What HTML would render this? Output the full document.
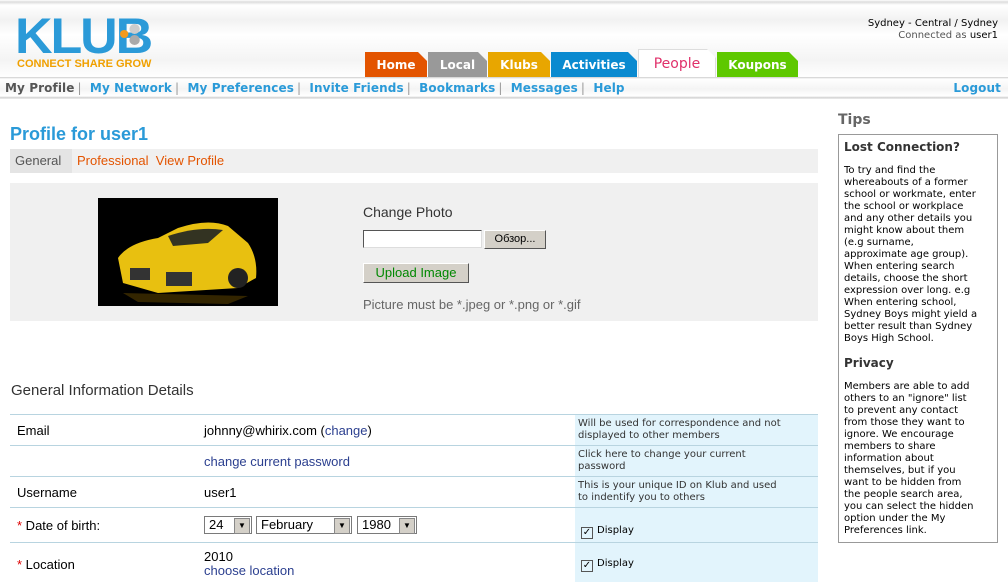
<!DOCTYPE html>
<html><head><meta charset="utf-8"><style>
*{margin:0;padding:0;box-sizing:border-box}
body{width:1008px;height:582px;overflow:hidden;background:#fff;font-family:"Liberation Sans",sans-serif;position:relative;font-size:13px;color:#000}
.a{position:absolute;white-space:nowrap}
.v{font-family:"DejaVu Sans",Verdana,sans-serif}
.tab{position:absolute;top:52px;height:26px;color:#fff;font:bold 12px "DejaVu Sans",sans-serif;text-align:center;line-height:27px;clip-path:polygon(0 0,calc(100% - 9px) 0,100% 9px,100% 100%,0 100%)}
.nav{font:bold 12px "DejaVu Sans",sans-serif;color:#2a9ad8;top:81px;letter-spacing:0.1px}
.sep{color:#999;font-weight:normal;margin:0 4px 0 3px}
.row{position:absolute;left:10px;width:808px;border-top:1px solid #b8d4e0}
.tips{font:10px/12px "DejaVu Sans",sans-serif;color:#000}
.lnk{color:#2b3f8f}
.sel{position:absolute;height:18px;border:1px solid #7a7a7a;background:#fff;font-size:13px;line-height:16px;padding-left:4px}
.sel:after{content:"▼";position:absolute;right:1px;top:1px;width:14px;height:14px;background:#d4d0c8;font-size:8px;line-height:14px;text-align:center;border:1px solid #888}
.cb{display:inline-block;width:12px;height:12px;border:1px solid #555;vertical-align:-2px;font-size:10px;line-height:10px;text-align:center;margin-right:4px}
</style></head><body>
<div class="a" style="left:0;top:0;width:1008px;height:78px;background:linear-gradient(#fff 0,#ddd 2px,#fff 5px,#f2f2f2 20px,#fff 35px,#f4f4f4 60px,#fff 78px)"></div>
<div class="a" style="left:15px;top:11px;font:bold 50px/50px 'Liberation Sans',sans-serif;color:#2b9ad8;letter-spacing:-2px;transform:scaleX(1.04);transform-origin:left">KLU<span style="position:relative">B<span style="position:absolute;left:4px;top:22px;width:8px;height:8px;border-radius:50%;background:#f29a1e"></span><span style="position:absolute;left:13px;top:16px;width:10px;height:10px;border-radius:50%;background:#ccc"></span><span style="position:absolute;left:13px;top:27px;width:10px;height:10px;border-radius:50%;background:#aaa"></span></span></div>
<div class="a" style="left:17px;top:58px;font:bold 11px 'Liberation Sans',sans-serif;color:#f0a000">CONNECT SHARE GROW</div>
<div class="a v" style="right:10px;top:18px;font-size:10px;text-align:right;line-height:12px">Sydney - Central / Sydney<br><span style="color:#555">Connected as </span>user1</div>
<div class="tab" style="left:365px;width:62px;background:#e35400">Home</div>
<div class="tab" style="left:428px;width:59px;background:#999">Local</div>
<div class="tab" style="left:488px;width:62px;background:#e8a600">Klubs</div>
<div class="tab" style="left:551px;width:86px;background:#0a8ad0">Activities</div>
<div class="tab" style="left:638px;top:49px;height:29px;width:78px;background:#fff;color:#e0306a;font-weight:normal;font-size:14px;line-height:28px;border:1px solid #ddd;border-bottom:none">People</div>
<div class="tab" style="left:717px;width:81px;background:#5ec800">Koupons</div>
<div class="a" style="left:0;top:77px;width:1008px;height:22px;background:linear-gradient(#ccc 0,#fff 2px,#f4f4f4 12px,#fff 19px,#ccc 21px,#fff 22px)"></div>
<div class="a nav" style="left:5px"><span style="color:#555">My Profile</span><span class="sep">|</span> My Network<span class="sep">|</span> My Preferences<span class="sep">|</span> Invite Friends<span class="sep">|</span> Bookmarks<span class="sep">|</span> Messages<span class="sep">|</span> Help</div>
<div class="a nav" style="right:7px">Logout</div>

<div class="a" style="left:10px;top:124px;font:bold 18px 'Liberation Sans',sans-serif;color:#2a9ad8">Profile for user1</div>
<div class="a" style="left:10px;top:149px;width:808px;height:24px;background:#f0f0f0"></div>
<div class="a" style="left:10px;top:149px;width:62px;height:24px;background:#e4e4e4"></div>
<div class="a" style="left:15px;top:153px;font-size:13px;color:#555">General</div>
<div class="a" style="left:77px;top:153px;font-size:13px;color:#e35400">Professional &nbsp;View Profile</div>

<div class="a" style="left:10px;top:183px;width:808px;height:138px;background:#f0f0f0"></div>
<svg class="a" style="left:98px;top:198px" width="180" height="108" viewBox="0 0 180 108"><rect width="180" height="108" fill="#000"/><path d="M20 60 Q30 45 60 40 L80 30 Q110 20 130 28 L150 45 Q160 60 158 80 L140 90 L60 95 L25 85 Z" fill="#e8c010"/><path d="M70 38 Q100 28 125 32 L110 45 L75 48Z" fill="#332"/><rect x="32" y="70" width="20" height="12" fill="#333"/><rect x="68" y="74" width="26" height="14" fill="#333"/><circle cx="140" cy="80" r="10" fill="#222"/><path d="M25 95 L150 98 L130 106 L40 104Z" fill="#553d00" opacity=".6"/></svg>
<div class="a" style="left:363px;top:204px;font-size:14px;color:#333">Change Photo</div>
<div class="a" style="left:363px;top:230px;width:119px;height:18px;background:#fff;border:1px solid #555;border-right-color:#ddd;border-bottom-color:#ddd"></div>
<div class="a" style="left:484px;top:230px;width:62px;height:19px;background:#d4d0c8;border:1px solid;border-color:#fff #555 #555 #fff;font-size:11px;text-align:center;line-height:17px">Обзор...</div>
<div class="a" style="left:363px;top:263px;width:106px;height:20px;background:#d4d0c8;border:1px solid;border-color:#fff #555 #555 #fff;font-size:13px;color:#080;text-align:center;line-height:18px">Upload Image</div>
<div class="a" style="left:363px;top:297px;font-size:13px;color:#666">Picture must be *.jpeg or *.png or *.gif</div>

<div class="a" style="left:11px;top:382px;font-size:15px;color:#333">General Information Details</div>
<div class="a" style="left:575px;top:414px;width:243px;height:168px;background:#e2f4fc"></div>
<div class="row" style="top:414px"></div><div class="row" style="top:445px"></div><div class="row" style="top:476px"></div><div class="row" style="top:507px"></div><div class="row" style="top:542px"></div>
<div class="a" style="left:17px;top:423px">Email</div>
<div class="a" style="left:204px;top:423px">johnny@whirix.com (<span class="lnk">change</span>)</div>
<div class="a v" style="left:578px;top:418px;font-size:10px;line-height:12px;color:#333">Will be used for correspondence and not<br>displayed to other members</div>
<div class="a lnk" style="left:204px;top:454px">change current password</div>
<div class="a v" style="left:578px;top:449px;font-size:10px;line-height:12px;color:#333">Click here to change your current<br>password</div>
<div class="a" style="left:17px;top:485px">Username</div>
<div class="a" style="left:204px;top:485px">user1</div>
<div class="a v" style="left:578px;top:480px;font-size:10px;line-height:12px;color:#333">This is your unique ID on Klub and used<br>to indentify you to others</div>
<div class="a" style="left:17px;top:518px"><span style="color:#d00">*</span> Date of birth:</div>
<div class="sel" style="left:204px;top:516px;width:48px">24</div>
<div class="sel" style="left:256px;top:516px;width:96px">February</div>
<div class="sel" style="left:357px;top:516px;width:60px">1980</div>
<div class="a v" style="left:581px;top:525px;font-size:10px"><span class="cb">✓</span>Display</div>
<div class="a" style="left:17px;top:557px"><span style="color:#d00">*</span> Location</div>
<div class="a" style="left:204px;top:550px;line-height:14px">2010<br><span class="lnk">choose location</span></div>
<div class="a v" style="left:581px;top:558px;font-size:10px"><span class="cb">✓</span>Display</div>

<div class="a v" style="left:838px;top:112px;font-size:14px;font-weight:bold;color:#666">Tips</div>
<div class="a" style="left:838px;top:134px;width:160px;height:409px;border:1px solid #999"></div>
<div class="a v" style="left:844px;top:140px;font-size:12px;font-weight:bold;color:#333">Lost Connection?</div>
<div class="a tips" style="left:844px;top:165px">To try and find the<br>whereabouts of a former<br>school or workmate, enter<br>the school or workplace<br>and any other details you<br>might know about them<br>(e.g surname,<br>approximate age group).<br>When entering search<br>details, choose the short<br>expression over long. e.g<br>When entering school,<br>Sydney Boys might yield a<br>better result than Sydney<br>Boys High School.</div>
<div class="a v" style="left:844px;top:356px;font-size:12px;font-weight:bold;color:#333">Privacy</div>
<div class="a tips" style="left:844px;top:381px">Members are able to add<br>others to an "ignore" list<br>to prevent any contact<br>from those they want to<br>ignore. We encourage<br>members to share<br>information about<br>themselves, but if you<br>want to be hidden from<br>the people search area,<br>you can select the hidden<br>option under the My<br>Preferences link.</div>
</body></html>
